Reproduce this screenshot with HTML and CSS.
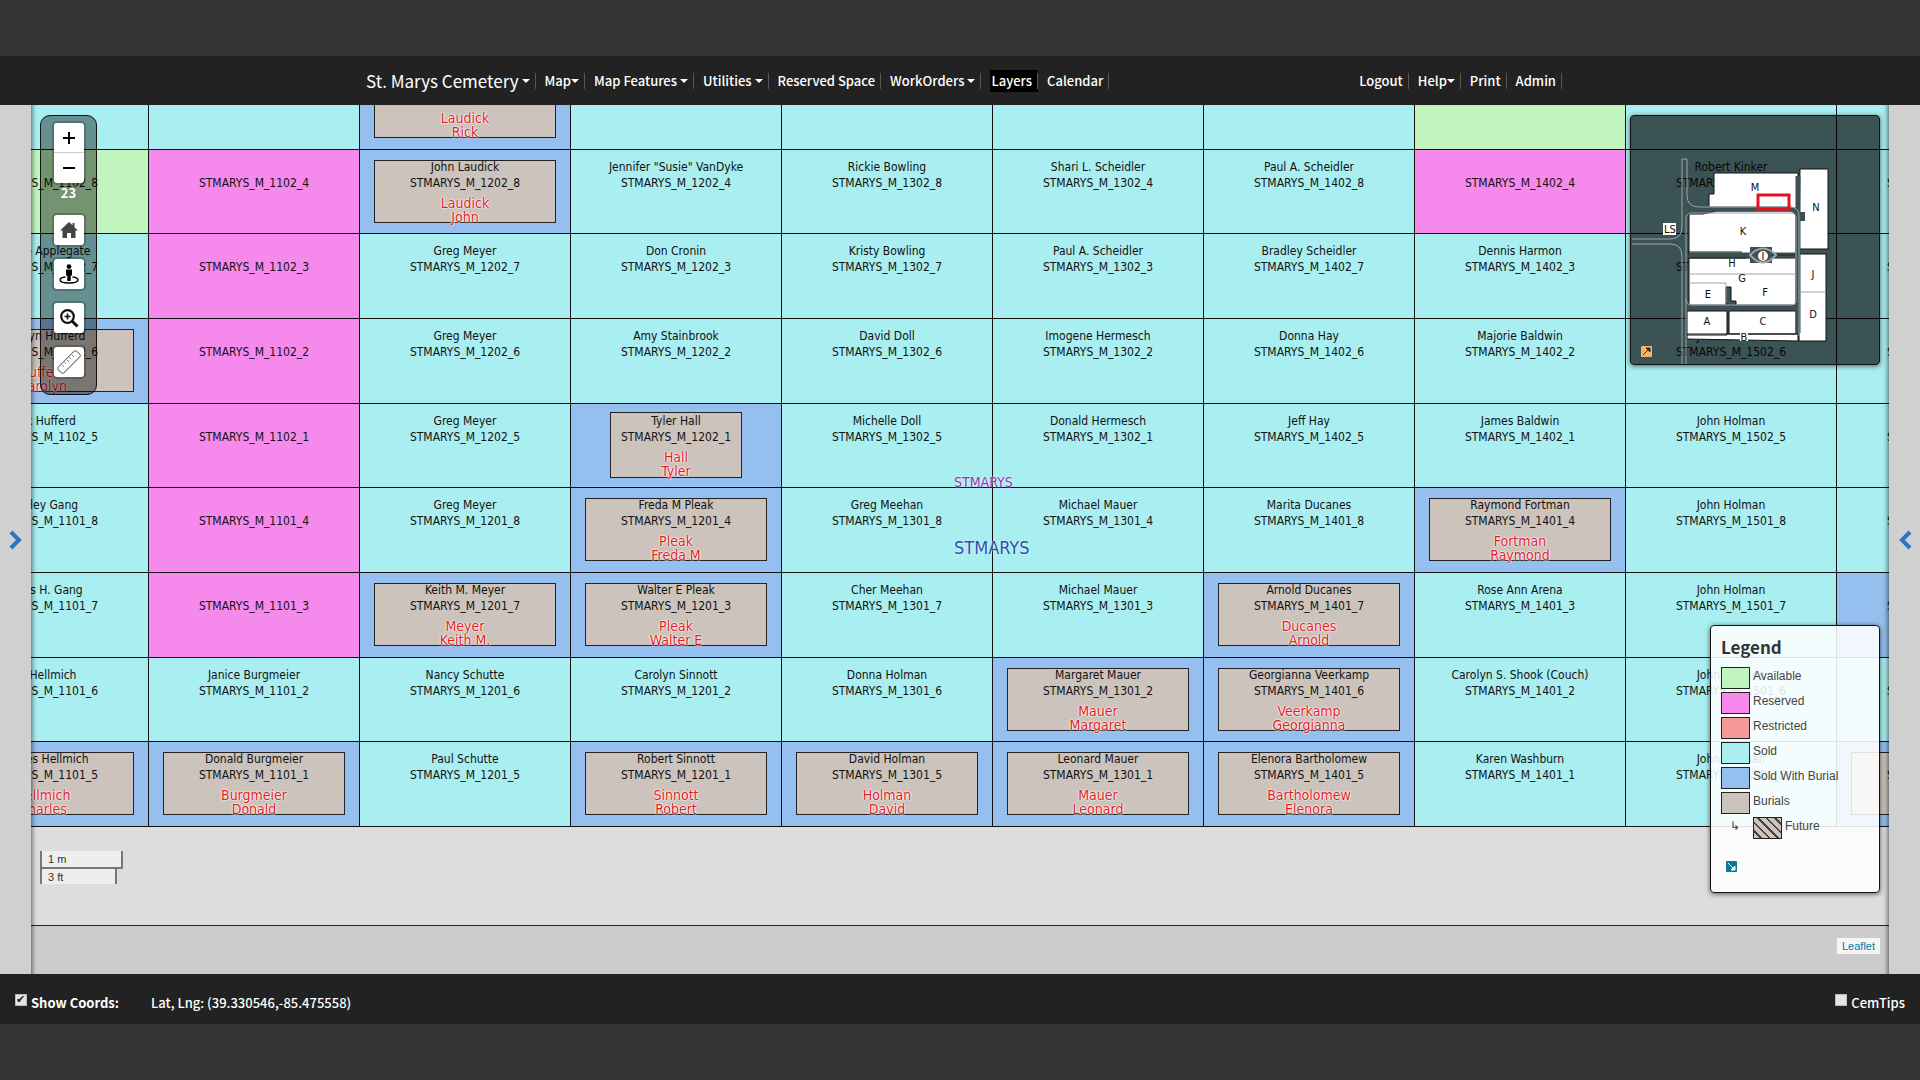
FILE: index.html
```html
<!DOCTYPE html>
<html lang="en">
<head>
    <meta charset="UTF-8">
    <meta name="viewport" content="width=device-width, initial-scale=1.0">
    <title>St. Marys Cemetery</title>
    <link rel="stylesheet" href="styles.css">
</head>
<body>
    <header class="topbar">
        <div class="container">
            <nav class="menu">
                <a class="brand caret" href="#">St. Marys Cemetery</a>
                <a class="caret tight" href="#">Map</a>
                <a class="caret" href="#">Map Features</a>
                <a class="caret" href="#">Utilities</a>
                <a href="#">Reserved Space</a>
                <a class="caret" href="#">WorkOrders</a>
                <a class="active" href="#">Layers</a>
                <a href="#">Calendar</a>
            </nav>
            <nav class="menu">
                <a href="#">Logout</a>
                <a class="caret tight" href="#">Help</a>
                <a href="#">Print</a>
                <a href="#">Admin</a>
            </nav>
        </div>
    </header>

    <main>
        <button class="rail" type="button" aria-label="Open left panel">
            <svg width="14" height="20" viewBox="0 0 14 20"><path d="M2 2l8 8-8 8" /></svg>
        </button>

        <div class="map">
            <!-- Plots are filled in by map.js -->
            <div class="plots" id="plots"></div>
            <div class="road"></div>

            <span class="map-label section">STMARYS</span>
            <span class="map-label cemetery">STMARYS</span>

            <!-- Left tools -->
            <div class="tools">
                <div class="zoom">
                    <button type="button" aria-label="Zoom in"><svg width="14" height="14" viewBox="0 0 14 14"><path d="M7 1v12M1 7h12" stroke="#000" stroke-width="2" /></svg></button>
                    <button type="button" aria-label="Zoom out"><svg width="14" height="14" viewBox="0 0 14 14"><path d="M1 7h12" stroke="#000" stroke-width="2" /></svg></button>
                </div>
                <div class="zoom-level">23</div>
                <button type="button" aria-label="Home">
                    <svg width="20" height="18" viewBox="0 0 20 18"><path d="M10 1L1 9.500h2.500V17h4.500v-5h4v5h4.500V9.500H19l-3.500-3.300V2h-2v2.300z" fill="#444" /></svg>
                </button>
                <button type="button" aria-label="Locate">
                    <svg width="20" height="20" viewBox="0 0 20 20"><circle cx="10" cy="2.600" r="2.400" /><path d="M7 5.500h6v6h-1.300V17H8.300v-5.500H7z" /><path d="M6.500 13C2.500 13.500 1 14.800 1 15.800 1 17.800 5 19 10 19s9-1.200 9-3.200c0-1-1.500-2.300-5.500-2.800" fill="none" stroke="#000" stroke-width="1.400" /></svg>
                </button>
                <button type="button" aria-label="Zoom to area">
                    <svg width="20" height="20" viewBox="0 0 20 20" fill="none" stroke="#111"><circle cx="8.500" cy="8.500" r="6.300" stroke-width="2.200" /><path d="M13 13l5.500 5.500" stroke-width="3" /><path d="M8.500 5.500v6M5.500 8.500h6" stroke-width="1.600" /></svg>
                </button>
                <button type="button" aria-label="Measure">
                    <svg width="24" height="24" viewBox="0 0 24 24" fill="none" stroke="#777"><rect x="-1" y="8" width="26" height="8" rx="2" transform="rotate(-45 12 12)" /><path d="M5 15l2 2M7.500 12.500l1.500 1.500M10 10l2 2M12.500 7.500L14 9M15 5l2 2" /></svg>
                </button>
            </div>

            <!-- Overview map -->
            <div class="overview">
                <svg width="248" height="248" viewBox="0 0 248 248">
                    <g fill="#fff" stroke="#111">
                        <path d="M83 57h84v36H78V78h5z" />
                        <path d="M169 53h28v80h-29z" />
                        <path d="M58 98h14l14-3h79v45H58z" />
                        <path d="M58 142h107v48h-60v-5h-5v-14h-5v19H58z" />
                        <path d="M168 138h27v87h-27z" />
                        <path d="M56 195h40v24H56zM98 195h67v23H98zM56 218h111v7l-111-2z" />
                    </g>
                    <g fill="none" stroke="#3d5155" stroke-width="5">
                        <path d="M58 93h100q9 0 9 9v82M58 139h107M57 191h110M167 60v157" />
                    </g>
                    <g fill="none" stroke="#9aa5a6" stroke-width="1">
                        <path d="M51 43h5v36q0 12 12 12h91q9 0 9 9v120M51 43v68q0 12-12 12H1M1 128h38q12 0 12 12v108M55 248V102q0-4 5-5h100q5 0 5 5v82q0 5-5 5H61q-6 0-6-6M168 176h27M58 158h107M58 167h37v20" />
                    </g>
                    <path d="M57 136h54M57 142h58M140 139h24" stroke="#222" fill="none" />
                    <path d="M119 131h22v16h-22z" fill="#3d5155" />
                    <path d="M119 139q13-13 26 0q-13 15-26 0z" fill="none" stroke="#9aa5a6" stroke-width="2" />
                    <circle cx="132" cy="140" r="5" fill="#fff" />
                    <path d="M169 96h5v9h-5z" fill="#3d5155" />
                    <rect x="32" y="107" width="13" height="12" fill="#fff" />
                    <rect x="127" y="79" width="31" height="14" fill="none" stroke="#e8101c" stroke-width="3" />
                    <path d="M109 217h8v8h-8z" fill="#fff" />
                    <g class="overview-names">
                        <text x="124" y="75">M</text>
                        <text x="185" y="95">N</text>
                        <text x="112" y="119">K</text>
                        <text x="39" y="117">LS</text>
                        <text x="132" y="144">I</text>
                        <text x="101" y="151">H</text>
                        <text x="111" y="166">G</text>
                        <text x="77" y="182">E</text>
                        <text x="134" y="180">F</text>
                        <text x="182" y="162">J</text>
                        <text x="76" y="209">A</text>
                        <text x="132" y="209">C</text>
                        <text x="182" y="202">D</text>
                        <text x="113" y="225">B</text>
                    </g>
                </svg>
                <button class="overview-toggle" type="button" aria-label="Hide overview">
                    <svg width="11" height="11" viewBox="0 0 11 11"><path d="M2 9l6-6M5 2h4v4z" fill="#333" stroke="#333" /></svg>
                </button>
            </div>

            <!-- Legend -->
            <div class="legend">
                <h4>Legend</h4>
                <ul>
                    <li><i class="available"></i>Available</li>
                    <li><i class="reserved"></i>Reserved</li>
                    <li><i class="restricted"></i>Restricted</li>
                    <li><i class="sold"></i>Sold</li>
                    <li><i class="with-burial"></i>Sold With Burial</li>
                    <li><i class="burials"></i>Burials</li>
                    <li><span class="sub">↳</span><i class="future"></i>Future</li>
                </ul>
                <button class="legend-toggle" type="button" aria-label="Hide legend">
                    <svg width="11" height="11" viewBox="0 0 11 11"><path d="M2 2l5 5M9 5v4H5z" fill="#fff" stroke="#fff" /></svg>
                </button>
            </div>

            <div class="scale">
                <div class="scale-m">1 m</div>
                <div class="scale-ft">3 ft</div>
            </div>
            <a class="attribution" href="#">Leaflet</a>
        </div>

        <button class="rail" type="button" aria-label="Open right panel">
            <svg width="14" height="20" viewBox="0 0 14 20"><path d="M12 2l-8 8 8 8" /></svg>
        </button>
    </main>

    <footer class="bottombar">
        <input type="checkbox" id="coords" checked>
        <label for="coords">Show Coords:</label>
        <span class="latlng">Lat, Lng: (39.330546,-85.475558)</span>
        <input type="checkbox" id="cemtips">
        <label class="tips" for="cemtips">CemTips</label>
    </footer>

    <script src="map.js"></script>
</body>
</html>
```
FILE: styles.css
```css
* {
    box-sizing: border-box;
}
body {
    margin: 0;
    padding: 56px 0;
    min-height: 100vh;
    display: flex;
    flex-direction: column;
    background-color: #333;
    font-family: "Noto Sans CJK SC", sans-serif;
    font-size: 13px;
    font-weight: 500;
    color: #fff;
}
button {
    padding: 0;
    border: none;
    cursor: pointer;
    display: flex;
    align-items: center;
    justify-content: center;
}

/* Top bar */
.topbar {
    height: 49px;
    background-color: #222;
}
.container {
    max-width: 1204px;
    height: 100%;
    margin: 0 auto;
    display: flex;
    justify-content: space-between;
}
.menu {
    display: flex;
    align-items: center;
}
.menu a {
    color: #fff;
    text-decoration: none;
    line-height: 22px;
    padding: 0 5px 0 9px;
    display: flex;
    align-items: center;
    white-space: nowrap;
}
.menu a::before {
    content: "";
    order: 2;
    width: 1px;
    height: 16px;
    margin-left: 5px;
    margin-right: -5px;
    background-color: #555;
}
.menu .caret::after {
    content: "";
    order: 1;
    margin-left: 3px;
    border: 4px solid transparent;
    border-top-color: #fff;
    border-bottom: none;
}
.menu .tight::after {
    margin-left: 0;
}
.menu .brand {
    font-size: 17px;
    font-weight: 400;
    padding-left: 8px;
}
.menu .active {
    background-color: #000;
    padding-left: 1px;
    margin-left: 9px;
}

/* Map */
main {
    flex: 1;
    display: flex;
    background-color: #d0d0d0;
}
.rail {
    width: 31px;
    background-color: #d0d0d0;
}
.rail path {
    fill: none;
    stroke: #2a76c4;
    stroke-width: 4;
}
.map {
    flex: 1;
    min-width: 0;
    position: relative;
    overflow: hidden;
    background-color: #ccc;
    font-family: "DejaVu Sans Condensed", "DejaVu Sans", sans-serif;
    font-size: 12px;
    font-weight: 400;
    color: #111;
}
.map::after {
    content: "";
    position: absolute;
    inset: 0;
    box-shadow: inset 6px 0 5px -5px rgba(0, 0, 0, 0.6), inset -6px 0 5px -5px rgba(0, 0, 0, 0.6);
    pointer-events: none;
}
.plots {
    display: grid;
    grid-template-columns: repeat(10, 211px);
    grid-template-rows: repeat(9, 1fr);
    height: 762px;
    margin: -40px 0 0 -93px;
}
.plot {
    position: relative;
    border-right: 1px solid #111;
    border-bottom: 1px solid #111;
    padding-top: 9px;
    text-align: center;
    line-height: 16px;
}
.plot div {
    position: relative;
    height: 16px;
}
.plot .burial {
    position: absolute;
    top: 10px;
    left: 14px;
    right: 14px;
    height: 63px;
    border: 1px solid #222;
    background-color: #cbc3bc;
}
.plot .burial.small {
    top: 8px;
    left: 39px;
    right: 39px;
    height: 66px;
}
.plot .deceased {
    height: 28px;
    margin-top: 5px;
    font-size: 14px;
    line-height: 14px;
    color: #e01b24;
    text-shadow: 0 0 2px #fff, 0 0 2px #fff, 0 0 1px #fff;
}
.available {
    background-color: #c0f5bd;
}
.reserved {
    background-color: #f68aec;
}
.restricted {
    background-color: #f59a98;
}
.sold {
    background-color: #a9eef0;
}
.with-burial {
    background-color: #94bfee;
}
.burials {
    background-color: #cbc3bc;
}
.road {
    height: 99px;
    background-color: #ddd;
    border-bottom: 1px solid #222;
}
.map-label {
    position: absolute;
    left: 923px;
    text-shadow: 0 0 2px #fff;
}
.section {
    top: 367px;
    font-size: 14px;
    line-height: 20px;
    color: #9a30b8;
}
.cemetery {
    top: 431px;
    font-size: 18px;
    line-height: 24px;
    color: #2d4fae;
}

/* Left tools */
.tools {
    position: absolute;
    top: 10px;
    left: 9px;
    width: 57px;
    height: 280px;
    padding-top: 7px;
    display: flex;
    flex-direction: column;
    align-items: center;
    background-color: rgba(0, 0, 0, 0.4);
    border: 1px solid #111;
    border-radius: 10px;
}
.tools button {
    width: 30px;
    height: 30px;
    background-color: #fff;
    border-radius: 3px;
    box-shadow: 0 0 0 2px rgba(0, 0, 0, 0.2);
    margin-bottom: 14px;
}
.zoom {
    border-radius: 3px;
    box-shadow: 0 0 0 2px rgba(0, 0, 0, 0.2);
}
.tools .zoom button {
    box-shadow: none;
    margin: 0;
}
.tools .zoom button:first-child {
    border-bottom: 1px solid #ccc;
    border-radius: 3px 3px 0 0;
}
.tools .zoom button:last-child {
    border-radius: 0 0 3px 3px;
}
.zoom-level {
    color: #fff;
    font: bold 13px/20px "Noto Sans CJK SC", sans-serif;
    margin-bottom: 12px;
}

/* Overview map */
.overview {
    position: absolute;
    top: 10px;
    right: 9px;
    width: 250px;
    height: 250px;
    background-color: rgba(0, 0, 0, 0.65);
    border: 1px solid #111;
    border-radius: 4px;
    box-shadow: 0 1px 5px rgba(0, 0, 0, 0.6);
}
.overview-names text {
    font-size: 11px;
    fill: #111;
    text-anchor: middle;
}
.overview-toggle {
    position: absolute;
    left: 10px;
    bottom: 7px;
    background-color: #f9b46c;
    border-radius: 1px;
}

/* Legend */
.legend {
    position: absolute;
    top: 520px;
    right: 9px;
    width: 170px;
    height: 268px;
    padding: 10px;
    background-color: rgba(255, 255, 255, 0.87);
    border: 1px solid #111;
    border-radius: 4px;
    box-shadow: 0 1px 5px rgba(0, 0, 0, 0.6);
    font-family: "Liberation Sans", sans-serif;
    color: #444;
}
.legend h4 {
    margin: 0 0 9px;
    font: bold 17px/22px "Noto Sans CJK SC", sans-serif;
    color: #333;
}
.legend ul {
    list-style: none;
    margin: 0;
    padding: 0;
}
.legend li {
    display: flex;
    height: 25px;
    line-height: 18px;
}
.legend i {
    width: 29px;
    height: 22px;
    margin-right: 3px;
    border: 1px solid #222;
}
.legend .sub {
    width: 32px;
    padding-right: 4px;
    text-align: center;
}
.legend .future {
    background: repeating-linear-gradient(45deg, #cbc3bc 0 4px, #444 4px 6px);
}
.legend-toggle {
    margin: 19px 0 0 5px;
    background-color: #0a7a9a;
    border-radius: 1px;
}

/* Scale and attribution */
.scale {
    position: absolute;
    left: 9px;
    bottom: 90px;
    font: 11px/17px "Liberation Sans", sans-serif;
    color: #333;
}
.scale div {
    padding-left: 6px;
    border: 2px solid #777;
    border-top: none;
    background-color: rgba(255, 255, 255, 0.5);
}
.scale-m {
    width: 83px;
    height: 18px;
}
.scale .scale-ft {
    width: 77px;
    height: 15px;
    border-bottom: none;
}
.attribution {
    position: absolute;
    right: 9px;
    bottom: 20px;
    padding: 0 5px;
    background-color: rgba(255, 255, 255, 0.8);
    font: 11px/16px "Liberation Sans", sans-serif;
    color: #0078a8;
    text-decoration: none;
}

/* Bottom bar */
.bottombar {
    height: 50px;
    padding: 6px 15px 0;
    display: flex;
    align-items: center;
    background-color: #222;
}
.bottombar input {
    width: 12px;
    height: 12px;
    margin: 0 4px 4px 0;
    appearance: none;
    background-color: #e4e4e4;
    border: 1px solid #bbb;
}
.bottombar input:checked::before {
    content: "✔";
    display: block;
    font: 11px/10px "DejaVu Sans", sans-serif;
    color: #222;
}
.bottombar label {
    font-weight: bold;
}
.bottombar .tips {
    font-weight: 500;
}
.latlng {
    margin-left: 32px;
    margin-right: auto;
}
```
FILE: map.js
```js
// One entry per column, top to bottom: [status, owner, surname, first name]
const A = "available", R = "reserved", S = "sold", B = "with-burial";

const columns = [
    [[S], [A], [S, "Wayne Applegate"], [B, "Carolyn Hufferd", "Hufferd", "Carolyn"], [S, "Jack Hufferd"], [S, "Wesley Gang"], [S, "James H. Gang"], [S, "Joe Hellmich"], [B, "Charles Hellmich", "Hellmich", "Charles"]],
    [[S], [R], [R], [R], [R], [R], [R], [S, "Janice Burgmeier"], [B, "Donald Burgmeier", "Burgmeier", "Donald"]],
    [[B, "", "Laudick", "Rick"], [B, "John Laudick", "Laudick", "John"], [S, "Greg Meyer"], [S, "Greg Meyer"], [S, "Greg Meyer"], [S, "Greg Meyer"], [B, "Keith M. Meyer", "Meyer", "Keith M."], [S, "Nancy Schutte"], [S, "Paul Schutte"]],
    [[S], [S, "Jennifer \"Susie\" VanDyke"], [S, "Don Cronin"], [S, "Amy Stainbrook"], [B, "Tyler Hall", "Hall", "Tyler"], [B, "Freda M Pleak", "Pleak", "Freda M"], [B, "Walter E Pleak", "Pleak", "Walter E"], [S, "Carolyn Sinnott"], [B, "Robert Sinnott", "Sinnott", "Robert"]],
    [[S], [S, "Rickie Bowling"], [S, "Kristy Bowling"], [S, "David Doll"], [S, "Michelle Doll"], [S, "Greg Meehan"], [S, "Cher Meehan"], [S, "Donna Holman"], [B, "David Holman", "Holman", "David"]],
    [[S], [S, "Shari L. Scheidler"], [S, "Paul A. Scheidler"], [S, "Imogene Hermesch"], [S, "Donald Hermesch"], [S, "Michael Mauer"], [S, "Michael Mauer"], [B, "Margaret Mauer", "Mauer", "Margaret"], [B, "Leonard Mauer", "Mauer", "Leonard"]],
    [[S], [S, "Paul A. Scheidler"], [S, "Bradley Scheidler"], [S, "Donna Hay"], [S, "Jeff Hay"], [S, "Marita Ducanes"], [B, "Arnold Ducanes", "Ducanes", "Arnold"], [B, "Georgianna Veerkamp", "Veerkamp", "Georgianna"], [B, "Elenora Bartholomew", "Bartholomew", "Elenora"]],
    [[A], [R], [S, "Dennis Harmon"], [S, "Majorie Baldwin"], [S, "James Baldwin"], [B, "Raymond Fortman", "Fortman", "Raymond"], [S, "Rose Ann Arena"], [S, "Carolyn S. Shook (Couch)"], [S, "Karen Washburn"]],
    [[S], [S, "Robert Kinker"], [S, "Pamela Kinker"], [S, "John Holman"], [S, "John Holman"], [S, "John Holman"], [S, "John Holman"], [S, "John Holman"], [S, "John Holman"]],
    [[S], [S], [S], [S], [S], [S], [B], [S], [B, "", "", ""]]
];

function plotCode(col, row) {
    const block = 11 + Math.floor(col / 2);
    const half = row <= 4 ? "02" : "01";
    const number = (col % 2 ? 4 : 8) - (row - 1) % 4;
    return "STMARYS_M_" + block + half + "_" + number;
}

const plots = document.getElementById("plots");

for (let row = 0; row < 9; row++) {
    for (let col = 0; col < columns.length; col++) {
        const [status, owner, surname, first] = columns[col][row];
        const code = row > 0 ? plotCode(col, row) : "";
        let html = "";

        if (surname !== undefined) {
            const size = owner === "Tyler Hall" ? "burial small" : "burial";
            html += `<div class="${size}"></div>`;
        }
        html += `<div>${owner || ""}</div><div>${code}</div>`;
        if (surname) {
            html += `<div class="deceased">${surname}<br>${first}</div>`;
        }

        const plot = document.createElement("div");
        plot.className = "plot " + status;
        plot.innerHTML = html;
        plots.appendChild(plot);
    }
}
```
